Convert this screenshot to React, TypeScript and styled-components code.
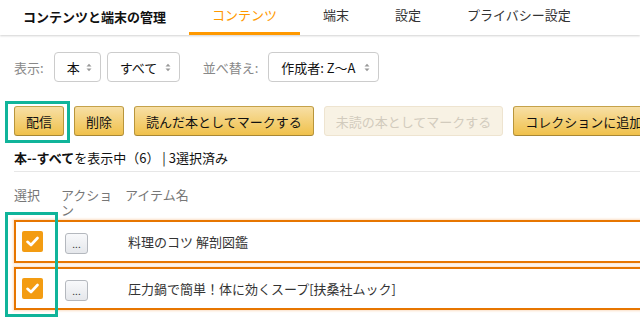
import React from "react";
import styled, { createGlobalStyle } from "styled-components";

const Global = createGlobalStyle`
  body {
    margin: 0;
    font-family: "Noto Sans CJK JP", "Noto Sans", sans-serif;
    color: #111;
    background: #fff;
    overflow: hidden;
  }
`;

const Header = styled.div`
  display: flex;
  align-items: stretch;
  height: 35px;
  box-shadow: 0 1px 2px rgba(0, 0, 0, 0.18);
  position: relative;
`;

const Title = styled.div`
  display: flex;
  align-items: center;
  padding: 0 23px;
  font-size: 13px;
  font-weight: bold;
  color: #111;
  padding-bottom: 3px;
`;

const Tab = styled.div<{ $active?: boolean }>`
  display: flex;
  align-items: center;
  padding: 0 23px 3px;
  font-size: 13px;
  color: ${(p) => (p.$active ? "#f90" : "#333")};
  border-bottom: 3px solid ${(p) => (p.$active ? "#f90" : "transparent")};
  box-sizing: border-box;
  height: 35px;
`;

const FilterBar = styled.div`
  display: flex;
  align-items: center;
  padding: 17px 14px 0;
  height: 30px;
`;

const Label = styled.span`
  font-size: 13px;
  color: #888;
  margin-right: 10px;
`;

const Select = styled.div<{ $w: number }>`
  display: flex;
  align-items: center;
  justify-content: space-between;
  box-sizing: border-box;
  width: ${(p) => p.$w}px;
  height: 30px;
  padding: 0 8px 0 12px;
  border: 1px solid #ccc;
  border-radius: 4px;
  font-size: 13px;
  color: #111;
  margin-right: 6px;
`;

const Spacer = styled.div`
  width: 17px;
`;

const Arrows = () => (
  <svg width="6" height="9" viewBox="0 0 6 9">
    <path d="M0.5 3.5 L3 0.8 L5.5 3.5 Z" fill="#999" />
    <path d="M0.5 5.5 L3 8.2 L5.5 5.5 Z" fill="#999" />
  </svg>
);

const Toolbar = styled.div`
  display: flex;
  align-items: center;
  gap: 10px;
  padding: 24px 14px 0;
  white-space: nowrap;
`;

const Highlight = styled.span`
  position: relative;
  display: inline-flex;
  &::after {
    content: "";
    position: absolute;
    left: -9px;
    top: -5px;
    width: 65px;
    height: 42px;
    border: 3px solid #10b49a;
    box-sizing: border-box;
  }
`;

const Button = styled.button<{ $gap?: number }>`
  flex-shrink: 0;
  height: 30px;
  padding: 0 11px;
  font-family: inherit;
  font-size: 13px;
  color: #111;
  border-radius: 3px;
  border: 1px solid;
  border-color: #c5a24a #b8953b #a88734;
  background: linear-gradient(to bottom, #f7dfa5, #f0c14b);
  margin-left: ${(p) => p.$gap ?? 0}px;
  &:disabled {
    color: #d2cbbd;
    border-color: #eee4d0;
    background: #f8f2e4;
  }
`;

const Summary = styled.div`
  margin: 12px 0 0 14px;
  padding-bottom: 4px;
  font-size: 13px;
  color: #111;
  border-bottom: 1px solid #e7e7e7;
  b {
    font-weight: bold;
  }
`;

const HeadRow = styled.div`
  display: grid;
  grid-template-columns: 47px 64px 1fr;
  margin: 15px 0 0 14px;
  font-size: 13px;
  color: #777;
  line-height: 15px;
  height: 33px;
`;

const HeadCell = styled.div<{ $w?: number }>`
  width: ${(p) => (p.$w ? `${p.$w}px` : "auto")};
  word-break: break-all;
`;

const Rows = styled.div`
  position: relative;
  margin-left: 14px;
  display: flex;
  flex-direction: column;
  gap: 4px;
  &::after {
    content: "";
    position: absolute;
    left: -9px;
    top: -8px;
    width: 53px;
    height: 105px;
    border: 3px solid #10b49a;
    box-sizing: border-box;
  }
`;

const Row = styled.div<{ $selected?: boolean }>`
  display: grid;
  grid-template-columns: 45px 64px 1fr;
  align-items: center;
  height: 43px;
  box-sizing: border-box;
  border: 2px solid ${(p) => (p.$selected ? "#e77600" : "transparent")};
  box-shadow: ${(p) =>
    p.$selected ? "0 0 2px 1px rgba(240, 160, 90, 0.35)" : "none"};
  margin-right: -4px;
`;

const Check = styled.div`
  width: 21px;
  height: 21px;
  margin-left: 6px;
  border-radius: 2px;
  background: #f39c12;
  display: flex;
  align-items: center;
  justify-content: center;
`;

const MoreButton = styled.button`
  width: 23px;
  height: 21px;
  margin-left: 4px;
  padding: 0;
  border: 1px solid #b4b8be;
  border-radius: 3px;
  background: linear-gradient(to bottom, #f8f9fb, #e5e7eb);
  font-size: 10px;
  color: #333;
  line-height: 10px;
  font-family: inherit;
`;

const ItemName = styled.div`
  padding-left: 3px;
  font-size: 13px;
  color: #333;
  white-space: nowrap;
`;

const items = [
  { title: "料理のコツ 解剖図鑑", selected: true },
  { title: "圧力鍋で簡単！体に効くスープ[扶桑社ムック]", selected: true },
  { title: "とっておきの家庭料理", selected: false },
];

export default function App() {
  return (
    <>
      <Global />
      <Header>
        <Title>コンテンツと端末の管理</Title>
        <Tab $active>コンテンツ</Tab>
        <Tab>端末</Tab>
        <Tab>設定</Tab>
        <Tab>プライバシー設定</Tab>
      </Header>

      <FilterBar>
        <Label>表示:</Label>
        <Select $w={47}>
          本<Arrows />
        </Select>
        <Select $w={73}>
          すべて<Arrows />
        </Select>
        <Spacer />
        <Label>並べ替え:</Label>
        <Select $w={111}>
          作成者: Z〜A<Arrows />
        </Select>
      </FilterBar>

      <Toolbar>
        <Highlight>
          <Button>配信</Button>
        </Highlight>
        <Button>削除</Button>
        <Button>読んだ本としてマークする</Button>
        <Button disabled>未読の本としてマークする</Button>
        <Button>コレクションに追加</Button>
      </Toolbar>

      <Summary>
        <b>本--すべて</b>を表示中（6） | 3選択済み
      </Summary>

      <HeadRow>
        <HeadCell>選択</HeadCell>
        <HeadCell $w={54}>アクション</HeadCell>
        <HeadCell>アイテム名</HeadCell>
      </HeadRow>

      <Rows>
        {items.map((it) => (
          <Row key={it.title} $selected={it.selected}>
            <div>
              {it.selected && (
                <Check>
                  <svg width="13" height="11" viewBox="0 0 13 11">
                    <path
                      d="M1.5 5.8 L5 9 L11.5 2"
                      fill="none"
                      stroke="#fff"
                      strokeWidth="2.6"
                      strokeLinecap="round"
                      strokeLinejoin="round"
                    />
                  </svg>
                </Check>
              )}
            </div>
            <div>{it.selected && <MoreButton>...</MoreButton>}</div>
            <ItemName>{it.title}</ItemName>
          </Row>
        ))}
      </Rows>
    </>
  );
}
